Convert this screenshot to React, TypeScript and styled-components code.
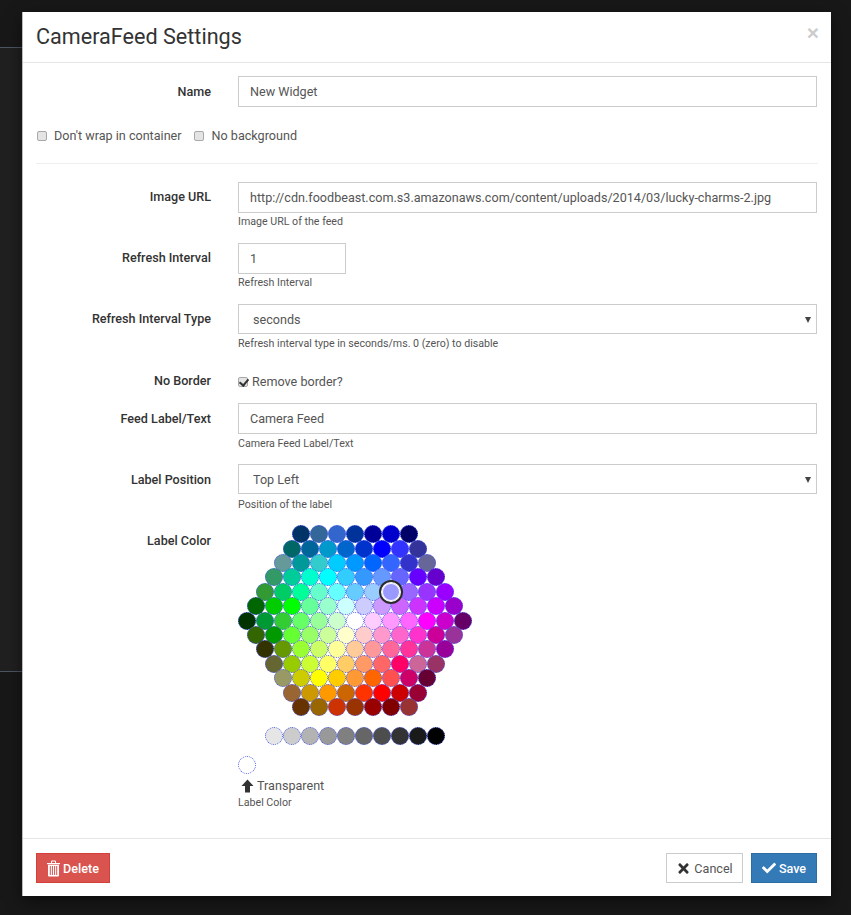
import React from "react";
import styled, { createGlobalStyle } from "styled-components";
import { FaTimes, FaCheck } from "react-icons/fa";

const Global = createGlobalStyle`
  html, body { margin: 0; padding: 0; background: #181818; }
  body { font-family: Roboto, "Liberation Sans", sans-serif; font-size: 12.6px; color: #444; }
  * { box-sizing: border-box; }
`;

const Page = styled.div`
  position: relative;
  width: 851px;
  height: 915px;
  padding: 12px 20px 19px 22px;
  overflow: hidden;
`;
const Backdrop = styled.div`
  position: absolute;
  left: 0;
  top: 47px;
  width: 22px;
  height: 625px;
  background: #202020;
  border-top: 1px solid #4d5660;
  border-bottom: 1px solid #4d5660;
`;
const Modal = styled.div`
  position: relative;
  width: 809px;
  height: 884px;
  background: #fff;
  border-left: 1px solid #bbb;
  box-shadow: 0 5px 15px rgba(0, 0, 0, 0.5);
  display: flex;
  flex-direction: column;
`;
const Header = styled.header`
  height: 51px;
  flex: none;
  padding: 0 13px;
  display: flex;
  align-items: center;
  justify-content: space-between;
  border-bottom: 1px solid #e5e5e5;
`;
const Title = styled.h4`
  margin: 0;
  font-size: 21.6px;
  font-weight: 400;
  color: #333;
  line-height: 48px;
`;
const Close = styled.span`
  font-family: "Liberation Sans", sans-serif;
  font-size: 21px;
  font-weight: 700;
  line-height: 1;
  color: #ccc;
  margin-top: -9px;
  margin-right: -1px;
`;
const Body = styled.div`
  flex: 1;
  padding: 13px 13px 0;
`;
const Row = styled.div<{ $mb?: number }>`
  display: grid;
  grid-template-columns: 175px 579px;
  column-gap: 27px;
  margin-bottom: ${(p) => p.$mb ?? 15}px;
`;
const Label = styled.label<{ $pt?: number }>`
  text-align: right;
  font-weight: 500;
  color: #333;
  line-height: 17px;
  padding-top: ${(p) => p.$pt ?? 7}px;
`;
const Input = styled.input<{ $w?: number }>`
  display: block;
  width: ${(p) => (p.$w ? `${p.$w}px` : "100%")};
  height: 31px;
  border: 1px solid #ccc;
  padding: 0 11px;
  font: 400 12.6px Roboto, sans-serif;
  color: #555;
  background: #fff;
  outline: none;
`;
const SelectWrap = styled.div`
  position: relative;
  &::after {
    content: "";
    position: absolute;
    right: 6px;
    top: 13px;
    border-left: 3.5px solid transparent;
    border-right: 3.5px solid transparent;
    border-top: 6px solid #444;
  }
`;
const Select = styled.select`
  display: block;
  width: 100%;
  height: 30px;
  appearance: none;
  border: 1px solid #ccc;
  border-radius: 0;
  padding: 0 14px;
  font: 400 12.6px Roboto, sans-serif;
  color: #555;
  background: #fff;
  outline: none;
`;
const Help = styled.div<{ $mt?: number }>`
  font-size: 10.65px;
  line-height: 12px;
  color: #555;
  margin-top: ${(p) => p.$mt ?? 3}px;
`;
const Check = styled.input<{ $gap: number }>`
  width: 10px;
  height: 10px;
  margin: 0 ${(p) => p.$gap}px 0 0;
  flex: none;
  appearance: none;
  background: #e4e4e4;
  border: 1px solid #a8a8a8;
  border-radius: 2px;
  position: relative;
  &:checked::after {
    content: "";
    position: absolute;
    left: 2px;
    top: -1px;
    width: 4px;
    height: 7px;
    border: solid #333;
    border-width: 0 2px 2px 0;
    transform: rotate(40deg);
  }
`;
const CheckRow = styled.div<{ $mt: number }>`
  display: flex;
  align-items: center;
  height: 17px;
  margin-top: ${(p) => p.$mt}px;
  color: #555;
`;
const OptionGroup = styled.label`
  display: flex;
  align-items: center;
  margin-left: 1px;
  margin-right: 11px;
`;
const InlineOption = styled.label`
  display: flex;
  align-items: center;
`;
const Rule = styled.hr`
  border: 0;
  border-top: 1px solid #eee;
  margin: 19px 0 18px;
`;
const Picker = styled.div`
  width: 234px;
  margin-top: 2px;
`;
const DotRow = styled.div`
  height: 14.4px;
  display: flex;
  justify-content: center;
  align-items: center;
`;
const Dot = styled.div<{ $c: string; $sel?: boolean }>`
  flex: none;
  width: 18px;
  height: 18px;
  border-radius: 50%;
  background: ${(p) => p.$c};
  border: 1px dotted #4a5af0;
  position: relative;
  ${(p) =>
    p.$sel
      ? `z-index: 2; border: 0; box-shadow: inset 0 0 0 1px #fff, 0 0 0 1px #fff, 0 0 0 3px #2a2a2a;`
      : ""}
`;
const GreyRow = styled.div`
  display: flex;
  margin: 13px 0 0 27px;
  height: 18px;
`;
const TransparentRow = styled.div`
  margin-top: 11px;
  height: 18px;
`;
const TransparentLabel = styled.div`
  display: flex;
  align-items: center;
  gap: 3px;
  margin: 3px 0 2px 3px;
  line-height: 17px;
  color: #555;
`;
const Footer = styled.footer`
  height: 58px;
  flex: none;
  border-top: 1px solid #e5e5e5;
  padding: 14px 14px 0 13px;
  display: flex;
  align-items: flex-start;
`;
const Button = styled.button<{ $bg: string; $bd: string; $fg: string; $w: number; $ml?: number; $weight?: number }>`
  height: 30px;
  width: ${(p) => p.$w}px;
  background: ${(p) => p.$bg};
  border: 1px solid ${(p) => p.$bd};
  color: ${(p) => p.$fg};
  font: ${(p) => p.$weight ?? 500} 12.6px Roboto, sans-serif;
  padding: 0;
  display: flex;
  align-items: center;
  justify-content: center;
  gap: 3px;
  margin-left: ${(p) => p.$ml ?? 0}px;
`;
const Spacer = styled.div`
  flex: 1;
`;

const hex: string[][] = [
  ["#003366","#336699","#3366CC","#003399","#000099","#0000CC","#000066"],
  ["#006666","#006699","#0099CC","#0066CC","#0033CC","#0000FF","#3333FF","#333399"],
  ["#669999","#009999","#33CCCC","#00CCFF","#0099FF","#0066FF","#3366FF","#3333CC","#666699"],
  ["#339966","#00CC99","#00FFCC","#00FFFF","#33CCFF","#3399FF","#6699FF","#6666FF","#6600FF","#6600CC"],
  ["#339933","#00CC66","#00FF99","#66FFCC","#66FFFF","#66CCFF","#99CCFF","#9999FF","#9966FF","#9933FF","#9900FF"],
  ["#006600","#00CC00","#00FF00","#66FF99","#99FFCC","#CCFFFF","#CCCCFF","#CC99FF","#CC66FF","#CC33FF","#CC00FF","#9900CC"],
  ["#003300","#009933","#33CC33","#66FF66","#99FF99","#CCFFCC","#FFFFFF","#FFCCFF","#FF99FF","#FF66FF","#FF00FF","#CC00CC","#660066"],
  ["#336600","#009900","#66FF33","#99FF66","#CCFF99","#FFFFCC","#FFCCCC","#FF99CC","#FF66CC","#FF33CC","#CC0099","#993399"],
  ["#333300","#669900","#99FF33","#CCFF66","#FFFF99","#FFCC99","#FF9999","#FF6699","#FF3399","#CC3399","#990099"],
  ["#666633","#99CC00","#CCFF33","#FFFF66","#FFCC66","#FF9966","#FF6666","#FF0066","#CC6699","#993366"],
  ["#999966","#CCCC00","#FFFF00","#FFCC00","#FF9933","#FF6600","#FF5050","#CC0066","#660033"],
  ["#996633","#CC9900","#FF9900","#CC6600","#FF3300","#FF0000","#CC0000","#990033"],
  ["#663300","#996600","#CC3300","#993300","#990000","#800000","#993333"],
];
const greys = ["#e6e6e6","#cccccc","#b3b3b3","#999999","#808080","#666666","#4d4d4d","#333333","#1a1a1a","#000000"];

const TrashIcon = () => (
  <svg width="13" height="17" viewBox="0 0 13 17" fill="currentColor">
    <path d="M0 3h13v1.2H0z" />
    <path d="M4 3V1.4C4 .8 4.4 .5 5 .5h3c.6 0 1 .3 1 .9V3H8V1.5H5V3z" />
    <path d="M1 4.8h11v10.4c0 .8-.6 1.3-1.2 1.3H2.2c-.6 0-1.2-.5-1.2-1.3z M2.8 6v9h1V6z M4.9 6v9h1V6z M7.1 6v9h1V6z M9.2 6v9h1V6z" fillRule="evenodd" />
  </svg>
);
const ArrowUp = () => (
  <svg width="13" height="14" viewBox="0 0 13 14" fill="#333">
    <path d="M6.5 0.5L12.5 7H9v6.5H4V7H0.5z" />
  </svg>
);

export default function App() {
  return (
    <Page>
      <Global />
      <Backdrop />
      <Modal>
        <Header>
          <Title>CameraFeed Settings</Title>
          <Close>×</Close>
        </Header>
        <Body>
          <Row $mb={0}>
            <Label>Name</Label>
            <Input defaultValue="New Widget" />
          </Row>
          <CheckRow $mt={20}>
            <OptionGroup>
              <Check type="checkbox" $gap={7} />
              Don't wrap in container
            </OptionGroup>
            <OptionGroup>
              <Check type="checkbox" $gap={8} />
              No background
            </OptionGroup>
          </CheckRow>
          <Rule />
          <Row>
            <Label $pt={6}>Image URL</Label>
            <div>
              <Input defaultValue="http://cdn.foodbeast.com.s3.amazonaws.com/content/uploads/2014/03/lucky-charms-2.jpg" />
              <Help>Image URL of the feed</Help>
            </div>
          </Row>
          <Row>
            <Label $pt={6}>Refresh Interval</Label>
            <div>
              <Input $w={108} defaultValue="1" />
              <Help>Refresh Interval</Help>
            </div>
          </Row>
          <Row>
            <Label $pt={6}>Refresh Interval Type</Label>
            <div>
              <SelectWrap>
                <Select defaultValue="seconds">
                  <option>seconds</option>
                  <option>ms</option>
                </Select>
              </SelectWrap>
              <Help $mt={4}>Refresh interval type in seconds/ms. 0 (zero) to disable</Help>
            </div>
          </Row>
          <Row $mb={13}>
            <Label>No Border</Label>
            <CheckRow $mt={8}>
              <InlineOption>
                <Check type="checkbox" defaultChecked $gap={4} />
                Remove border?
              </InlineOption>
            </CheckRow>
          </Row>
          <Row $mb={14}>
            <Label>Feed Label/Text</Label>
            <div>
              <Input defaultValue="Camera Feed" />
              <Help $mt={4}>Camera Feed Label/Text</Help>
            </div>
          </Row>
          <Row $mb={14}>
            <Label>Label Position</Label>
            <div>
              <SelectWrap>
                <Select defaultValue="Top Left">
                  <option>Top Left</option>
                  <option>Top Right</option>
                </Select>
              </SelectWrap>
              <Help $mt={5}>Position of the label</Help>
            </div>
          </Row>
          <Row $mb={0}>
            <Label>Label Color</Label>
            <div>
              <Picker>
                {hex.map((row, i) => (
                  <DotRow key={i}>
                    {row.map((c) => (
                      <Dot key={c} $c={c} $sel={c === "#9999FF"} />
                    ))}
                  </DotRow>
                ))}
                <GreyRow>
                  {greys.map((c) => (
                    <Dot key={c} $c={c} />
                  ))}
                </GreyRow>
                <TransparentRow>
                  <Dot $c="#fff" />
                </TransparentRow>
                <TransparentLabel>
                  <ArrowUp />
                  Transparent
                </TransparentLabel>
              </Picker>
              <Help>Label Color</Help>
            </div>
          </Row>
        </Body>
        <Footer>
          <Button $bg="#d9534f" $bd="#d43f3a" $fg="#fff" $w={74}>
            <TrashIcon />
            Delete
          </Button>
          <Spacer />
          <Button $bg="#fff" $bd="#ccc" $fg="#555" $w={77} $weight={400}>
            <FaTimes size={15} color="#333" />
            Cancel
          </Button>
          <Button $bg="#337ab7" $bd="#2e6da4" $fg="#fff" $w={66} $ml={8}>
            <FaCheck size={14} />
            Save
          </Button>
        </Footer>
      </Modal>
    </Page>
  );
}
